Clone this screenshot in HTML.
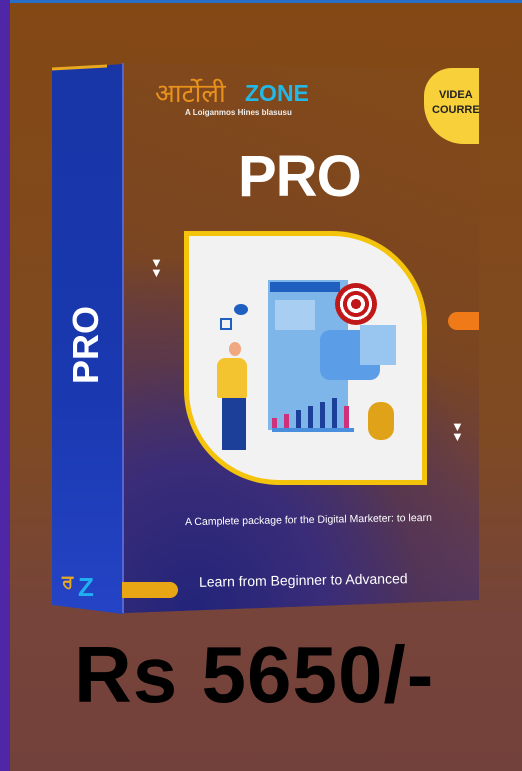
<!DOCTYPE html>
<html><head><meta charset="utf-8"><style>
*{margin:0;padding:0;box-sizing:border-box}
body{width:522px;height:771px;overflow:hidden;position:relative;font-family:"Liberation Sans","Noto Sans CJK SC",sans-serif;background:linear-gradient(180deg,#834814 0%,#7f4a22 55%,#76443a 80%,#73413b 100%)}
.abs{position:absolute}
</style></head><body>
<div class="abs" style="left:0;top:0;width:10px;height:771px;background:#4f27a6"></div>
<div class="abs" style="left:10px;top:0;width:512px;height:3px;background:#2a6fc7"></div>
<!-- spine -->
<div class="abs" style="left:52px;top:64px;width:71px;height:550px;background:linear-gradient(180deg,#1836a6,#1a38b0 60%,#2444c6);clip-path:polygon(0 5px,71px 0,71px 550px,0 541px)"></div>
<div class="abs" style="left:52px;top:66px;width:55px;height:3px;background:#e8a820;transform:skewY(-3deg)"></div>
<div class="abs" style="left:56px;top:334px;color:#fff;font-weight:bold;font-size:36px;transform:rotate(-90deg);transform-origin:center;width:60px;text-align:center;line-height:40px">PRO</div>
<div class="abs" style="left:62px;top:572px;color:#e8a820;font-weight:bold;font-size:18px">ਰ</div>
<div class="abs" style="left:78px;top:572px;color:#1fb0f0;font-weight:bold;font-size:26px">Z</div>
<!-- front -->
<div class="abs" style="left:122px;top:63px;width:357px;height:550px;clip-path:polygon(0 0,357px 7px,357px 537px,0 550px);background:radial-gradient(ellipse 380px 420px at 20% 100%,#22247a 0%,#3a2c78 35%,rgba(80,50,80,0.6) 60%,rgba(0,0,0,0) 85%),linear-gradient(200deg,#844a18 0%,#7a4521 45%,#5b3a5c 75%,#312a78 100%)"></div>
<div class="abs" style="left:122px;top:63px;width:2px;height:550px;background:#5566d0"></div>
<div class="abs" style="left:155px;top:73px;color:#e8921c;font-size:26px;font-family:'Noto Sans CJK SC',sans-serif">आर्टोली</div>
<div class="abs" style="left:245px;top:80px;color:#22b8e8;font-weight:bold;font-size:23px">ZONE</div>
<div class="abs" style="left:185px;top:108px;color:#eee;font-size:8px;font-weight:bold">A Loiganmos Hines blasusu</div>
<div class="abs" style="left:424px;top:68px;width:55px;height:76px;background:#f8d03a;border-radius:28px 0 0 40px"></div>
<div class="abs" style="left:432px;top:88px;color:#222;font-weight:bold;font-size:11px;line-height:15px;text-align:center">VIDEA<br>COURRE</div>
<div class="abs" style="left:238px;top:143px;color:#fff;font-weight:bold;font-size:58px;letter-spacing:-1px">PRO</div>
<!-- card -->
<div class="abs" style="left:184px;top:231px;width:243px;height:254px;background:#f4c40c;border-radius:0 95px 0 95px"></div>
<div class="abs" style="left:189px;top:236px;width:233px;height:244px;background:#f2f2f2;border-radius:0 90px 0 90px"></div>
<!-- illustration -->
<div class="abs" style="left:268px;top:280px;width:80px;height:150px;background:#7fb6ea"></div>
<div class="abs" style="left:270px;top:282px;width:70px;height:10px;background:#1e5fc0"></div>
<div class="abs" style="left:275px;top:300px;width:40px;height:30px;background:#a8cff2"></div>
<div class="abs" style="left:320px;top:330px;width:60px;height:50px;background:#5b9de6;border-radius:10px"></div>
<div class="abs" style="left:360px;top:325px;width:36px;height:40px;background:#98c6f0"></div>
<div class="abs" style="left:335px;top:283px;width:42px;height:42px;border-radius:50%;background:radial-gradient(circle,#c01818 0 5px,#fff 5px 9px,#c01818 9px 13px,#fff 13px 16px,#c01818 16px)"></div>
<div class="abs" style="left:272px;top:428px;width:82px;height:4px;background:#4a8fde"></div>
<div class="abs" style="left:272px;top:418px;width:5px;height:10px;background:#d0307a"></div>
<div class="abs" style="left:284px;top:414px;width:5px;height:14px;background:#d0307a"></div>
<div class="abs" style="left:296px;top:410px;width:5px;height:18px;background:#1c3f9a"></div>
<div class="abs" style="left:308px;top:406px;width:5px;height:22px;background:#1c3f9a"></div>
<div class="abs" style="left:320px;top:402px;width:5px;height:26px;background:#1c3f9a"></div>
<div class="abs" style="left:332px;top:398px;width:5px;height:30px;background:#1c3f9a"></div>
<div class="abs" style="left:344px;top:406px;width:5px;height:22px;background:#d0307a"></div>
<div class="abs" style="left:220px;top:318px;width:12px;height:12px;border:2px solid #1e5fc0"></div>
<div class="abs" style="left:234px;top:304px;width:14px;height:11px;background:#1e5fc0;border-radius:50%"></div>
<div class="abs" style="left:229px;top:342px;width:12px;height:14px;background:#f0a880;border-radius:50%"></div>
<div class="abs" style="left:217px;top:358px;width:30px;height:40px;background:#f4c430;border-radius:8px 8px 2px 2px"></div>
<div class="abs" style="left:222px;top:398px;width:24px;height:52px;background:#1c3f9a"></div>
<div class="abs" style="left:368px;top:402px;width:26px;height:38px;background:#e0a218;border-radius:12px"></div>
<!-- side markers -->
<div class="abs" style="left:150px;top:258px;color:#fff;font-size:13px;line-height:10px">▼<br>▼</div>
<div class="abs" style="left:451px;top:422px;color:#fff;font-size:13px;line-height:10px">▼<br>▼</div>
<div class="abs" style="left:448px;top:312px;width:31px;height:18px;background:#f07a18;border-radius:9px 0 0 9px"></div>
<div class="abs" style="left:185px;top:514px;color:#fff;font-size:10.5px;transform:rotate(-1deg)">A Camplete package for the Digital Marketer: to learn</div>
<div class="abs" style="left:122px;top:582px;width:56px;height:16px;background:#e8a614;border-radius:0 8px 8px 0"></div>
<div class="abs" style="left:199px;top:572px;color:#fff;font-size:14px;transform:rotate(-1deg)">Learn from Beginner to Advanced</div>
<div class="abs" style="left:74px;top:630px;color:#000;font-weight:bold;font-size:80px;letter-spacing:1px;line-height:90px">Rs 5650/-</div>
</body></html>
